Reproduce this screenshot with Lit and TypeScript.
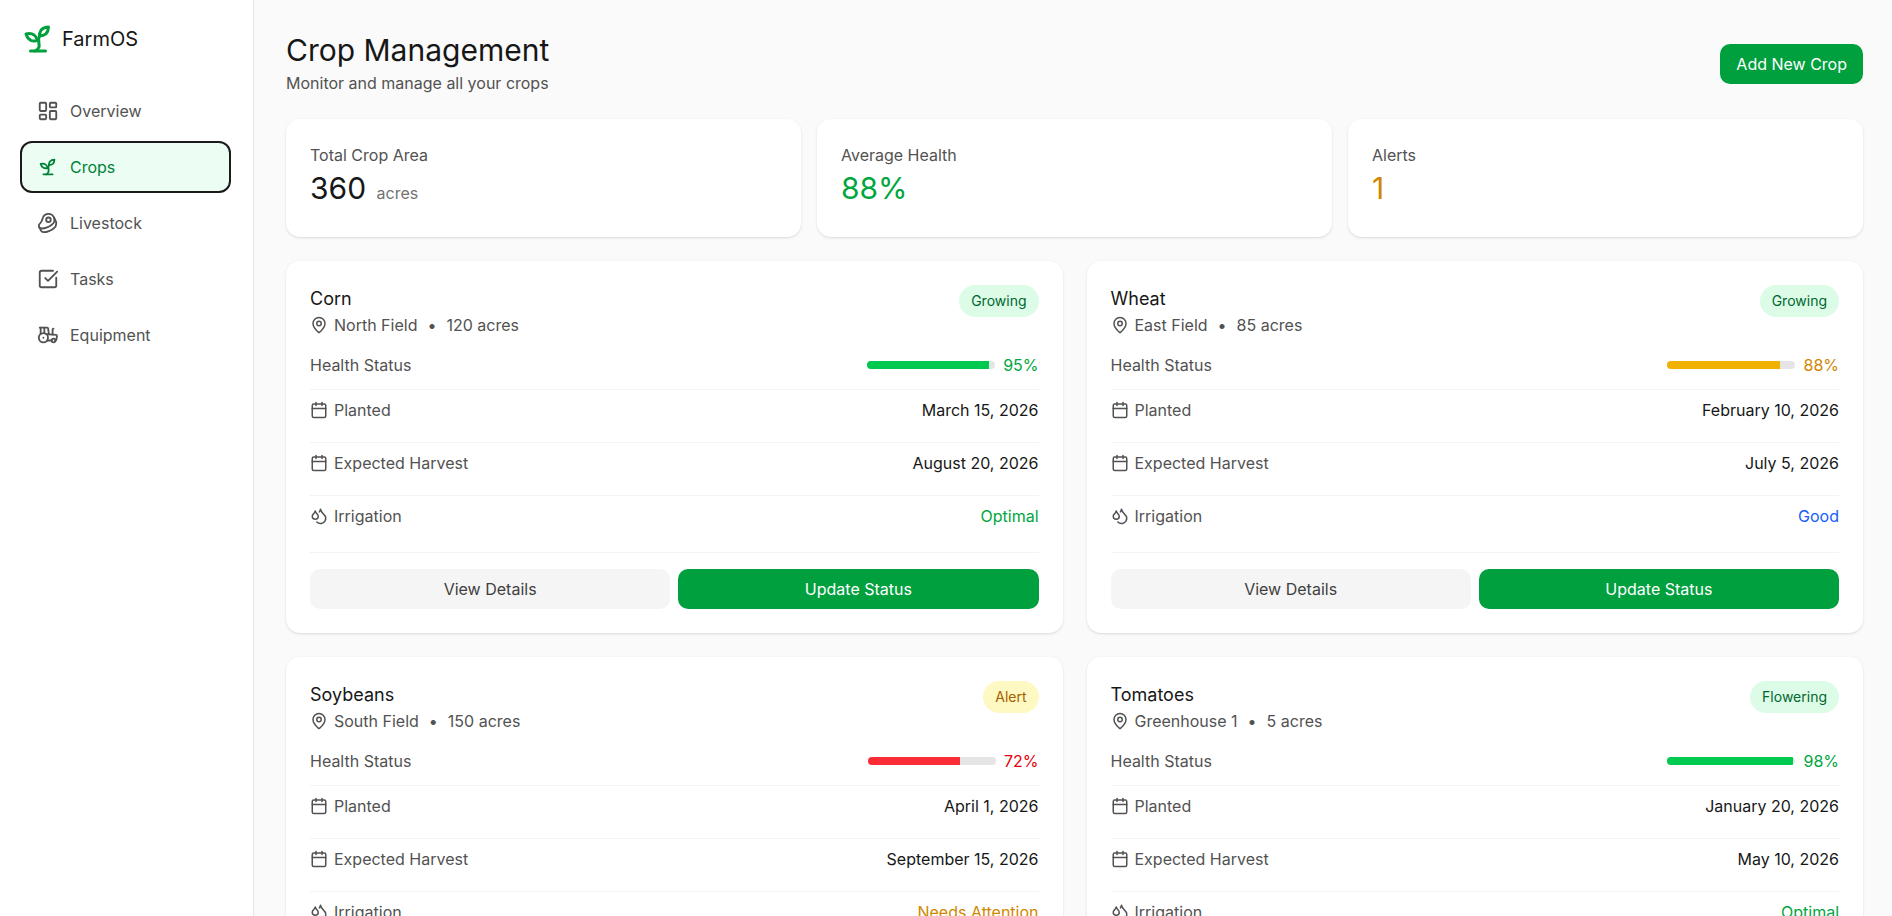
import { LitElement, css, html, svg } from 'lit'
import { customElement } from 'lit/decorators.js'

const icons = {
  sprout: svg`<path d="M7 20h10"/><path d="M10 20c5.5-2.5.8-6.4 3-10"/><path d="M9.5 9.4c1.1.8 1.8 2.2 2.3 3.7-2 .4-3.5.4-4.8-.3-1.2-.6-2.3-1.9-3-4.2 2.8-.5 4.4 0 5.5.8z"/><path d="M14.1 6a7 7 0 0 0-1.1 4c1.9-.1 3.3-.6 4.3-1.4 1-1 1.6-2.3 1.7-4.6-2.7.1-4 1-4.9 2z"/>`,
  dashboard: svg`<rect width="7" height="9" x="3" y="3" rx="1"/><rect width="7" height="5" x="14" y="3" rx="1"/><rect width="7" height="9" x="14" y="12" rx="1"/><rect width="7" height="5" x="3" y="16" rx="1"/>`,
  beef: svg`<circle cx="12.5" cy="8.5" r="2.5"/><path d="M12.5 2a6.5 6.5 0 0 0-6.22 4.6c-1.1 3.13-.78 3.9-3.18 6.08A3 3 0 0 0 5 18c4 0 8.4-1.8 11.4-4.3A6.5 6.5 0 0 0 12.5 2Z"/><path d="m18.5 6 2.19 4.5a6.48 6.48 0 0 1 .31 2 6.49 6.49 0 0 1-2.6 5.2C15.4 20.2 11 22 7 22a3 3 0 0 1-2.68-1.66L2.4 16.5"/>`,
  check: svg`<path d="M21 10.5V19a2 2 0 0 1-2 2H5a2 2 0 0 1-2-2V5a2 2 0 0 1 2-2h12.5"/><path d="m9 11 3 3L22 4"/>`,
  tractor: svg`<path d="m10 11 11 .9a1 1 0 0 1 .8 1.1l-.665 4.158a1 1 0 0 1-.988.842H20"/><path d="M16 18h-5"/><path d="M18 5a1 1 0 0 0-1 1v5.573"/><path d="M3 4h8.129a1 1 0 0 1 .99.863L13 11.246"/><path d="M4 11V4"/><path d="M7 15h.01"/><path d="M8 10.1V4"/><circle cx="18" cy="18" r="2"/><circle cx="7" cy="15" r="5"/>`,
  pin: svg`<path d="M20 10c0 4.993-5.539 10.193-7.399 11.799a1 1 0 0 1-1.202 0C9.539 20.193 4 14.993 4 10a8 8 0 0 1 16 0"/><circle cx="12" cy="10" r="3"/>`,
  calendar: svg`<path d="M8 2v4"/><path d="M16 2v4"/><rect width="18" height="18" x="3" y="4" rx="2"/><path d="M3 10h18"/>`,
  droplets: svg`<path d="M7 16.3c2.2 0 4-1.83 4-4.05 0-1.16-.57-2.26-1.71-3.19S7.29 6.75 7 5.3c-.29 1.45-1.14 2.84-2.29 3.76S3 11.1 3 12.25c0 2.22 1.8 4.05 4 4.05z"/><path d="M12.56 6.6A10.97 10.97 0 0 0 14 3.02c.5 2.5 2 4.9 4 6.5s3 3.5 3 5.5a6.98 6.98 0 0 1-11.91 4.97"/>`,
}

type IconName = keyof typeof icons

const icon = (name: IconName, size: number) => html`
  <svg class="icon" width=${size} height=${size} viewBox="0 0 24 24" fill="none" stroke="currentColor"
    stroke-width="2" stroke-linecap="round" stroke-linejoin="round">${icons[name]}</svg>
`

const nav: { label: string; icon: IconName; active?: boolean }[] = [
  { label: 'Overview', icon: 'dashboard' },
  { label: 'Crops', icon: 'sprout', active: true },
  { label: 'Livestock', icon: 'beef' },
  { label: 'Tasks', icon: 'check' },
  { label: 'Equipment', icon: 'tractor' },
]

const crops = [
  { name: 'Corn', field: 'North Field', acres: '120 acres', status: 'Growing', statusClass: 'ok', health: 95, tone: 'green',
    planted: 'March 15, 2026', harvest: 'August 20, 2026', irrigation: 'Optimal', irrigationClass: 'green' },
  { name: 'Wheat', field: 'East Field', acres: '85 acres', status: 'Growing', statusClass: 'ok', health: 88, tone: 'yellow',
    planted: 'February 10, 2026', harvest: 'July 5, 2026', irrigation: 'Good', irrigationClass: 'blue' },
  { name: 'Soybeans', field: 'South Field', acres: '150 acres', status: 'Alert', statusClass: 'alert', health: 72, tone: 'red',
    planted: 'April 1, 2026', harvest: 'September 15, 2026', irrigation: 'Needs Attention', irrigationClass: 'yellow' },
  { name: 'Tomatoes', field: 'Greenhouse 1', acres: '5 acres', status: 'Flowering', statusClass: 'ok', health: 98, tone: 'green',
    planted: 'January 20, 2026', harvest: 'May 10, 2026', irrigation: 'Optimal', irrigationClass: 'green' },
]

@customElement('app-root')
export class AppRoot extends LitElement {
  static styles = css`
    :host {
      display: flex;
      height: 100vh;
      overflow: hidden;
      background: #fafafa;
      color: #171717;
      font-family: Inter, "Liberation Sans", sans-serif;
      font-size: 16px;
      line-height: 24px;
    }
    .icon { flex: none; display: block; }

    .sidebar {
      flex: none;
      box-sizing: border-box;
      width: 254px;
      padding: 21px 24px 0 22px;
      background: #fff;
      border-right: 1px solid #e5e5e5;
    }
    .logo {
      display: flex;
      align-items: center;
      gap: 6px;
      margin-left: -2px;
      height: 36px;
      margin-bottom: 30px;
      font-size: 20px;
      color: #171717;
    }
    .logo .icon { color: #00a03e; }
    .nav { display: flex; flex-direction: column; gap: 8px; }
    .nav-item {
      display: flex;
      align-items: center;
      gap: 11px;
      height: 48px;
      padding-left: 15px;
      border-radius: 10px;
      color: #525252;
    }
    .nav-item.active {
      background: #ecfdf3;
      color: #008236;
      outline: 2px solid #1a1a1a;
    }

    .main {
      flex: 1;
      min-width: 0;
      padding: 32px 29px 0 32px;
    }
    .header {
      display: flex;
      align-items: center;
      justify-content: space-between;
      margin-bottom: 24px;
    }
    h1 {
      margin: 0 0 3px;
      font-size: 30px;
      line-height: 36px;
      font-weight: 400;
    }
    .sub { color: #525252; }
    .btn {
      box-sizing: border-box;
      display: flex;
      align-items: center;
      justify-content: center;
      height: 40px;
      border-radius: 10px;
      font: inherit;
      border: 0;
    }
    .btn.primary { background: #00a03e; color: #fff; }
    .btn.secondary { background: #f5f5f5; color: #404040; }
    .add { padding: 0 16px; }

    .stats {
      display: grid;
      grid-template-columns: repeat(3, 1fr);
      gap: 16px;
      margin-bottom: 24px;
    }
    .panel {
      background: #fff;
      border-radius: 14px;
      box-shadow: 0 1px 3px rgba(0, 0, 0, 0.1), 0 1px 2px -1px rgba(0, 0, 0, 0.1);
      padding: 24px;
    }
    .stat-label { color: #525252; }
    .stat-value {
      margin-top: 1px;
      font-size: 30px;
      line-height: 40px;
    }
    .stat-value small { font-size: 16px; color: #737373; margin-left: 2px; }

    .grid {
      display: grid;
      grid-template-columns: repeat(2, 1fr);
      gap: 24px;
    }
    .crop-head {
      display: flex;
      justify-content: space-between;
      align-items: flex-start;
      margin-bottom: 16px;
    }
    .crop-name { font-size: 18px; line-height: 28px; }
    .meta { display: flex; align-items: center; gap: 6px; color: #525252; }
    .dot { margin: 0 4px; }
    .badge {
      height: 32px;
      box-sizing: border-box;
      padding: 0 12px;
      border-radius: 16px;
      font-size: 14px;
      display: flex;
      align-items: center;
    }
    .badge.ok { background: #dcfce7; color: #016630; }
    .badge.alert { background: #fef9c2; color: #a65f00; }

    .row {
      display: flex;
      justify-content: space-between;
      padding: 8px 0 20px;
      border-bottom: 1px solid #f3f3f3;
    }
    .row.health { padding: 0 0 12px; align-items: center; }
    .row.last { padding-bottom: 24px; }
    .row-label { display: flex; align-items: center; gap: 6px; color: #525252; }
    .health-right { display: flex; align-items: center; gap: 8px; }
    .track { width: 128px; height: 8px; border-radius: 4px; background: #e5e5e5; overflow: hidden; }
    .fill { height: 100%; }
    .fill.green { background: #00c950; }
    .fill.yellow { background: #f0b100; }
    .fill.red { background: #fb2c36; }
    .green { color: #00a63e; }
    .yellow { color: #d08700; }
    .red { color: #e7000b; }
    .blue { color: #155dfc; }
    .actions {
      display: grid;
      grid-template-columns: 1fr 1fr;
      gap: 8px;
      padding-top: 16px;
    }
  `

  render() {
    return html`
      <aside class="sidebar">
        <div class="logo">${icon('sprout', 36)}<span>FarmOS</span></div>
        <nav class="nav">
          ${nav.map(n => html`
            <div class="nav-item ${n.active ? 'active' : ''}">${icon(n.icon, 22)}<span>${n.label}</span></div>
          `)}
        </nav>
      </aside>
      <main class="main">
        <div class="header">
          <div>
            <h1>Crop Management</h1>
            <div class="sub">Monitor and manage all your crops</div>
          </div>
          <button class="btn primary add">Add New Crop</button>
        </div>
        <div class="stats">
          <div class="panel">
            <div class="stat-label">Total Crop Area</div>
            <div class="stat-value">360 <small>acres</small></div>
          </div>
          <div class="panel">
            <div class="stat-label">Average Health</div>
            <div class="stat-value green">88%</div>
          </div>
          <div class="panel">
            <div class="stat-label">Alerts</div>
            <div class="stat-value yellow">1</div>
          </div>
        </div>
        <div class="grid">
          ${crops.map(c => html`
            <div class="panel">
              <div class="crop-head">
                <div>
                  <div class="crop-name">${c.name}</div>
                  <div class="meta">${icon('pin', 18)}<span>${c.field}</span><span class="dot">•</span><span>${c.acres}</span></div>
                </div>
                <div class="badge ${c.statusClass}">${c.status}</div>
              </div>
              <div class="row health">
                <span class="row-label">Health Status</span>
                <div class="health-right">
                  <div class="track"><div class="fill ${c.tone}" style="width: ${c.health}%"></div></div>
                  <span class=${c.tone}>${c.health}%</span>
                </div>
              </div>
              <div class="row">
                <span class="row-label">${icon('calendar', 18)}Planted</span>
                <span>${c.planted}</span>
              </div>
              <div class="row">
                <span class="row-label">${icon('calendar', 18)}Expected Harvest</span>
                <span>${c.harvest}</span>
              </div>
              <div class="row last">
                <span class="row-label">${icon('droplets', 18)}Irrigation</span>
                <span class=${c.irrigationClass}>${c.irrigation}</span>
              </div>
              <div class="actions">
                <button class="btn secondary">View Details</button>
                <button class="btn primary">Update Status</button>
              </div>
            </div>
          `)}
        </div>
      </main>
    `
  }
}
